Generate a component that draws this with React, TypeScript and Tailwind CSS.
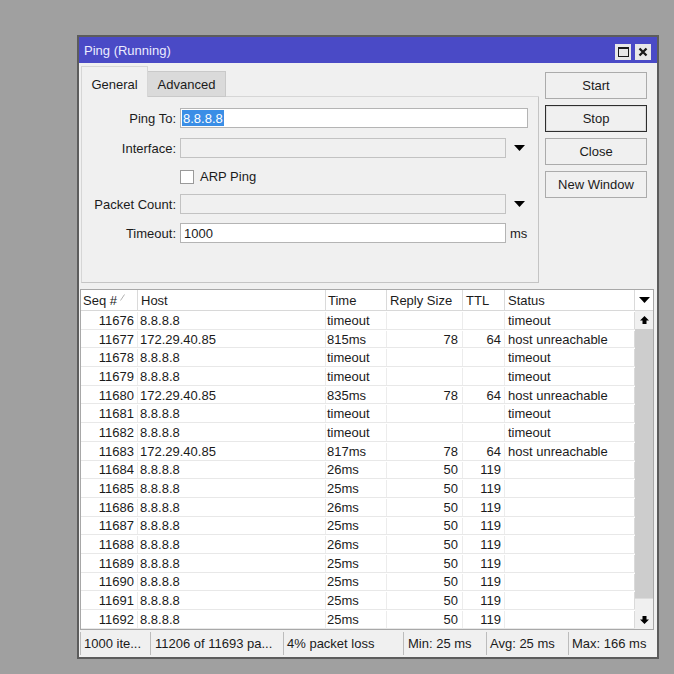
import React from "react";

type Row = { seq: string; host: string; time: string; size: string; ttl: string; status: string };

const rows: Row[] = [
  { seq: "11676", host: "8.8.8.8", time: "timeout", size: "", ttl: "", status: "timeout" },
  { seq: "11677", host: "172.29.40.85", time: "815ms", size: "78", ttl: "64", status: "host unreachable" },
  { seq: "11678", host: "8.8.8.8", time: "timeout", size: "", ttl: "", status: "timeout" },
  { seq: "11679", host: "8.8.8.8", time: "timeout", size: "", ttl: "", status: "timeout" },
  { seq: "11680", host: "172.29.40.85", time: "835ms", size: "78", ttl: "64", status: "host unreachable" },
  { seq: "11681", host: "8.8.8.8", time: "timeout", size: "", ttl: "", status: "timeout" },
  { seq: "11682", host: "8.8.8.8", time: "timeout", size: "", ttl: "", status: "timeout" },
  { seq: "11683", host: "172.29.40.85", time: "817ms", size: "78", ttl: "64", status: "host unreachable" },
  { seq: "11684", host: "8.8.8.8", time: "26ms", size: "50", ttl: "119", status: "" },
  { seq: "11685", host: "8.8.8.8", time: "25ms", size: "50", ttl: "119", status: "" },
  { seq: "11686", host: "8.8.8.8", time: "26ms", size: "50", ttl: "119", status: "" },
  { seq: "11687", host: "8.8.8.8", time: "25ms", size: "50", ttl: "119", status: "" },
  { seq: "11688", host: "8.8.8.8", time: "26ms", size: "50", ttl: "119", status: "" },
  { seq: "11689", host: "8.8.8.8", time: "25ms", size: "50", ttl: "119", status: "" },
  { seq: "11690", host: "8.8.8.8", time: "25ms", size: "50", ttl: "119", status: "" },
  { seq: "11691", host: "8.8.8.8", time: "25ms", size: "50", ttl: "119", status: "" },
  { seq: "11692", host: "8.8.8.8", time: "25ms", size: "50", ttl: "119", status: "" },
];

function DownTri() {
  return (
    <svg width="11" height="6" viewBox="0 0 11 6">
      <polygon points="0,0 11,0 5.5,6" fill="#000" />
    </svg>
  );
}

function Btn({ label, focused }: { label: string; focused?: boolean }) {
  return (
    <div
      className={
        focused
          ? "h-[27px] w-[102px] flex items-center justify-center bg-[#f0f0f0] border border-[#2e2e2e] shadow-[inset_0_0_0_1px_#dcdcdc]"
          : "h-[27px] w-[102px] flex items-center justify-center bg-[#f0f0f0] border border-[#ababab]"
      }
    >
      {label}
    </div>
  );
}

export default function App() {
  return (
    <div className="w-[674px] h-[674px] bg-[#a0a0a0] pt-[35px] pl-[77px] font-['Liberation_Sans',Arial,sans-serif] text-[13px] leading-none text-[#1b1b1b]">
      <div className="w-[582px] h-[624px] border-2 border-[#5c5c5c] bg-[#f0f0f0] flex flex-col">
        {/* Title bar */}
        <div className="h-[26px] bg-[#4a4ac6] flex items-center justify-between pl-[5px] pr-[6px]">
          <span className="text-[#ececff]">Ping (Running)</span>
          <div className="flex gap-[4px] mt-[4px]">
            <div className="w-[16px] h-[16px] bg-[#e8e8e8] flex items-center justify-center">
              <div className="w-[11px] h-[10px] border border-[#1a1a1a] border-t-2" />
            </div>
            <div className="w-[16px] h-[16px] bg-[#e8e8e8] flex items-center justify-center">
              <svg width="10" height="10" viewBox="0 0 10 10">
                <path d="M1.5 1.5 L8.5 8.5 M8.5 1.5 L1.5 8.5" stroke="#1a1a1a" strokeWidth="2.3" />
              </svg>
            </div>
          </div>
        </div>

        {/* Body */}
        <div className="flex-1 flex flex-col">
          <div className="flex pt-[3px] pl-[2px]">
            {/* Tabs + panel */}
            <div className="w-[458px] flex flex-col">
              <div className="h-[31px] flex items-end">
                <div className="w-[67px] h-[31px] border-l border-t border-r border-[#d6d6d6] bg-[#f0f0f0] flex items-center justify-center pt-[4px]">
                  General
                </div>
                <div className="w-[78px] h-[26px] bg-[#dadada] border-t border-r border-b border-[#c9c9c9] flex items-center justify-center pt-[1px]">
                  Advanced
                </div>
                <div className="flex-1 h-[1px] bg-[#d6d6d6]" />
              </div>
              <div className="h-[186px] border-l border-r border-b border-l-[#d6d6d6] border-r-[#c4c4c4] border-b-[#c4c4c4] flex flex-col pt-[11px]">
                <div className="h-[20px] flex items-center">
                  <div className="w-[94px] text-right">Ping To:</div>
                  <div className="ml-[4px] w-[348px] h-[20px] bg-white border border-[#b4b4b4] flex items-center pl-[1px]">
                    <span className="bg-[#3a8ee6] text-white h-[16px] flex items-center px-[1px]">8.8.8.8</span>
                  </div>
                </div>
                <div className="h-[20px] flex items-center mt-[10px]">
                  <div className="w-[94px] text-right">Interface:</div>
                  <div className="ml-[4px] w-[326px] h-[20px] bg-[#f0f0f0] border border-[#c2c2c2]" />
                  <div className="ml-[8px] flex items-center">
                    <DownTri />
                  </div>
                </div>
                <div className="h-[15px] flex items-center mt-[11px]">
                  <div className="ml-[98px] w-[14px] h-[14px] bg-white border border-[#9a9a9a]" />
                  <span className="ml-[6px]">ARP Ping</span>
                </div>
                <div className="h-[20px] flex items-center mt-[10px]">
                  <div className="w-[94px] text-right">Packet Count:</div>
                  <div className="ml-[4px] w-[326px] h-[20px] bg-[#f0f0f0] border border-[#c2c2c2]" />
                  <div className="ml-[8px] flex items-center">
                    <DownTri />
                  </div>
                </div>
                <div className="h-[20px] flex items-center mt-[9px]">
                  <div className="w-[94px] text-right">Timeout:</div>
                  <div className="ml-[4px] w-[326px] h-[20px] bg-white border border-[#b4b4b4] flex items-center pl-[3px]">
                    1000
                  </div>
                  <span className="ml-[4px]">ms</span>
                </div>
              </div>
            </div>
            {/* Buttons */}
            <div className="ml-[6px] pt-[6px] flex flex-col gap-[6px]">
              <Btn label="Start" />
              <Btn label="Stop" focused />
              <Btn label="Close" />
              <Btn label="New Window" />
            </div>
          </div>

          {/* Table */}
          <div className="mt-[6px] ml-[1px] w-[574px] border border-[#a8a8a8] bg-white flex flex-col">
            <div className="h-[21px] flex border-b border-[#d8d8d8]">
              <div className="w-[57px] border-r border-[#dadada] flex items-center pl-[2px]">
                Seq #
                <svg className="ml-[3px] mb-[5px]" width="5" height="7" viewBox="0 0 5 7">
                  <path d="M0.5 6.5 L4.5 0.5" stroke="#b0b0b0" strokeWidth="1" />
                </svg>
              </div>
              <div className="w-[188px] border-r border-[#dadada] flex items-center pl-[3px]">Host</div>
              <div className="w-[61px] border-r border-[#dadada] flex items-center pl-[2px]">Time</div>
              <div className="w-[76px] border-r border-[#dadada] flex items-center pl-[3px]">Reply Size</div>
              <div className="w-[42px] border-r border-[#dadada] flex items-center pl-[3px]">TTL</div>
              <div className="w-[130px] border-r border-[#dadada] flex items-center pl-[3px]">Status</div>
              <div className="w-[18px] flex items-center justify-center">
                <DownTri />
              </div>
            </div>
            <div className="flex">
              <div className="flex flex-col">
                {rows.map((r) => (
                  <div key={r.seq} className="h-[18.7px] flex border-b border-[#e8e8e8] pt-[1px]">
                    <div className="w-[57px] border-r border-[#ececec] flex items-center justify-end pr-[3px]">{r.seq}</div>
                    <div className="w-[188px] border-r border-[#ececec] flex items-center pl-[2px]">{r.host}</div>
                    <div className="w-[61px] border-r border-[#ececec] flex items-center pl-[1px]">{r.time}</div>
                    <div className="w-[76px] border-r border-[#ececec] flex items-center justify-end pr-[4px]">{r.size}</div>
                    <div className="w-[42px] border-r border-[#ececec] flex items-center justify-end pr-[3px]">{r.ttl}</div>
                    <div className="w-[130px] border-r border-[#dadada] flex items-center pl-[3px]">{r.status}</div>
                  </div>
                ))}
              </div>
              <div className="w-[18px] flex flex-col">
                <div className="h-[18px] bg-[#f0f0f0] flex items-center justify-center">
                  <svg width="9" height="8" viewBox="0 0 9 8">
                    <polygon points="4.5,0 9,4.5 6.5,4.5 6.5,8 2.5,8 2.5,4.5 0,4.5" fill="#000" />
                  </svg>
                </div>
                <div className="h-[269px] bg-[#cdcdcd]" />
                <div className="flex-1 bg-[#f0f0f0] border-t border-[#dcdcdc]" />
                <div className="h-[18px] bg-[#f0f0f0] flex items-center justify-center">
                  <svg width="9" height="8" viewBox="0 0 9 8">
                    <polygon points="4.5,8 9,3.5 6.5,3.5 6.5,0 2.5,0 2.5,3.5 0,3.5" fill="#000" />
                  </svg>
                </div>
              </div>
            </div>
          </div>

          {/* Status bar */}
          <div className="flex-1 flex pl-[1px] pt-[2px] pb-[2px]">
            <div className="w-[70px] border-l border-[#bcbcbc] flex items-center pl-[3px]">1000 ite...</div>
            <div className="w-[133px] border-l border-[#bcbcbc] flex items-center pl-[4px]">11206 of 11693 pa...</div>
            <div className="w-[120px] border-l border-[#bcbcbc] flex items-center pl-[3px]">4% packet loss</div>
            <div className="w-[83px] border-l border-[#bcbcbc] flex items-center pl-[4px]">Min: 25 ms</div>
            <div className="w-[82px] border-l border-[#bcbcbc] flex items-center pl-[3px]">Avg: 25 ms</div>
            <div className="w-[87px] border-l border-[#bcbcbc] flex items-center pl-[3px]">Max: 166 ms</div>
          </div>
        </div>
      </div>
    </div>
  );
}
